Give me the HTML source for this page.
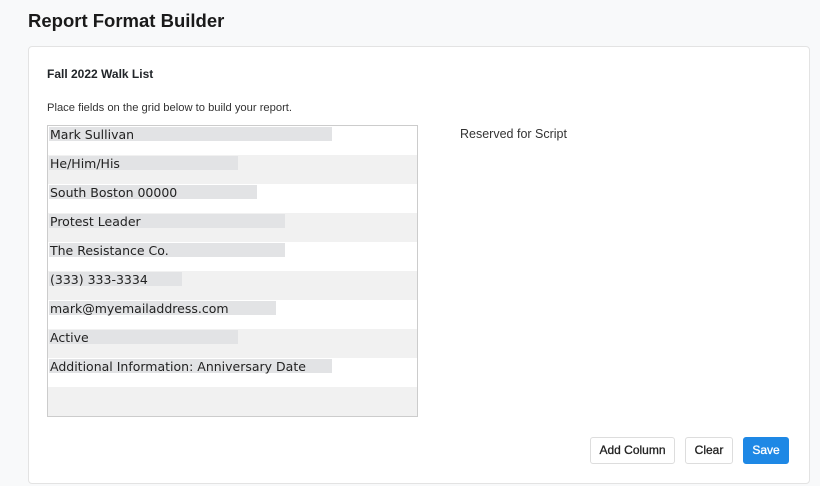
<!DOCTYPE html>
<html><head><style>
body{margin:0;background:#f8f9fa;font-family:"Liberation Sans",sans-serif;width:820px;height:486px;overflow:hidden;position:relative;color:#212529}
h1{position:absolute;left:28px;top:10px;margin:0;font-size:18.5px;font-weight:bold;color:#1a1a1a}
.card{position:absolute;left:28px;top:46px;width:780px;height:436px;background:#fff;border:1px solid #e3e3e3;border-radius:4px}
.t{position:absolute;left:47px;top:67px;font-size:12px;font-weight:bold}
.p{position:absolute;left:47px;top:102px;font-size:11.2px;color:#333}
.grid{position:absolute;left:47px;top:125px;width:371px;height:292px;border:1px solid #ccc;box-sizing:border-box;overflow:hidden}
.row{height:29px;position:relative}
.row.g{background:#f1f1f1}
.bar{position:absolute;left:1px;top:1px;height:14px;background:#e2e3e5}
.row span{position:absolute;left:2px;top:1px;font-family:"DejaVu Sans",sans-serif;font-size:12.5px;color:#222;line-height:15px}
.rs{position:absolute;left:460px;top:127px;font-size:12.5px;color:#333}
.btn{position:absolute;top:437px;height:27px;box-sizing:border-box;border:1px solid #ddd;border-radius:3px;background:#fff;font-size:12px;font-weight:normal;color:#222;text-align:center;line-height:25px;-webkit-text-stroke:0.3px currentColor}
</style></head><body>
<h1>Report Format Builder</h1>
<div class="card"></div>
<div class="t">Fall 2022 Walk List</div>
<div class="p">Place fields on the grid below to build your report.</div>
<div class="grid">
<div class="row"><div class="bar" style="width:283px"></div><span>Mark Sullivan</span></div>
<div class="row g"><div class="bar" style="width:189px"></div><span>He/Him/His</span></div>
<div class="row"><div class="bar" style="width:208px"></div><span>South Boston 00000</span></div>
<div class="row g"><div class="bar" style="width:236px"></div><span>Protest Leader</span></div>
<div class="row"><div class="bar" style="width:236px"></div><span>The Resistance Co.</span></div>
<div class="row g"><div class="bar" style="width:133px"></div><span>(333) 333-3334</span></div>
<div class="row"><div class="bar" style="width:227px"></div><span>mark@myemailaddress.com</span></div>
<div class="row g"><div class="bar" style="width:189px"></div><span>Active</span></div>
<div class="row"><div class="bar" style="width:283px"></div><span>Additional Information: Anniversary Date</span></div>
<div class="row g" style="height:31px"></div>
</div>
<div class="rs">Reserved for Script</div>
<div class="btn" style="left:590px;width:85px">Add Column</div>
<div class="btn" style="left:685px;width:48px">Clear</div>
<div class="btn" style="left:743px;width:46px;background:#1e88e5;border-color:#1e88e5;color:#fff">Save</div>
</body></html>
